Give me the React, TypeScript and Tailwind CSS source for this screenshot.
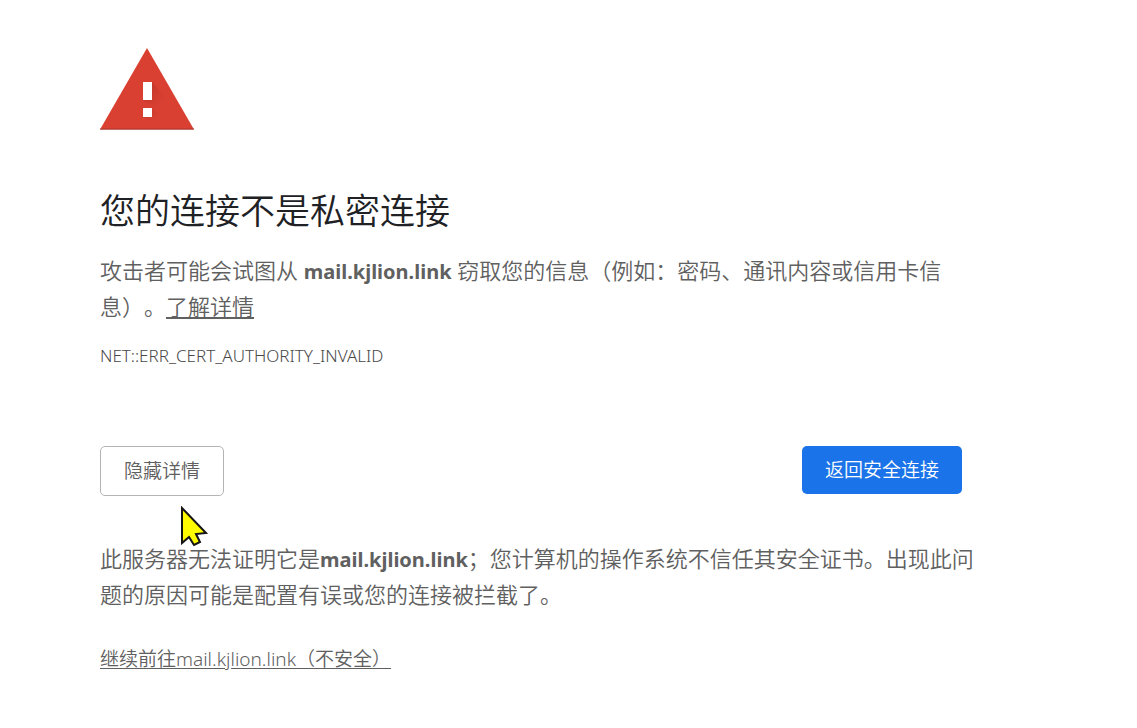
function WarningIcon() {
  return (
    <svg className="block h-[84px] w-24" viewBox="0 0 96 84" aria-hidden="true">
      <defs>
        <linearGradient id="shade" x1="0" y1="0" x2="1" y2="1">
          <stop offset="0" stopColor="#a82c22" stopOpacity="0.75" />
          <stop offset="1" stopColor="#db4437" stopOpacity="0" />
        </linearGradient>
      </defs>
      <path d="M47 1 94 82.500H0Z" fill="#da4032" />
      <path d="M52 35l14 16v16L43 53h9Z" fill="url(#shade)" />
      <path d="M52 61l9 10-9 4-9-5Z" fill="url(#shade)" />
      <path d="M0 82h94" stroke="#a8382e" />
      <path d="M43 35h9v18h-9ZM43 61h9v9h-9Z" fill="#fff" />
    </svg>
  );
}

function Pointer() {
  return (
    <svg
      className="pointer-events-none absolute left-20 top-[60px] h-[42px] w-8"
      viewBox="0 0 32 42"
      aria-hidden="true"
    >
      <path
        d="M2 2v35l7-6 5 8 6-3-4-8 10-1Z"
        fill="#fffb00"
        stroke="#151515"
        strokeWidth="2"
      />
    </svg>
  );
}

export default function App() {
  return (
    <main className="min-h-screen bg-white pb-12 pl-[100px] pr-6 pt-[47px] font-['Noto_Sans','Noto_Sans_CJK_SC',sans-serif] font-[350] text-[#606060] [text-spacing-trim:space-all]">
      <div className="max-w-[862px]">
        <WarningIcon />
        <h1 className="mt-[54px] font-['Noto_Sans_CJK_SC',sans-serif] text-[35px] font-[350] leading-[48px] text-[#202124]">
          您的连接不是私密连接
        </h1>
        <p className="mt-5 text-[22px] leading-[35px] md:whitespace-nowrap">
          攻击者可能会试图从 <strong className="text-[20px]">mail.kjlion.link</strong>{" "}
          窃取您的信息（例如：密码、通讯内容或信用卡信
          <br className="hidden md:inline" />
          息）。
          <a href="#details" className="underline underline-offset-2">
            了解详情
          </a>
        </p>
        <p className="mt-5 text-[17px] leading-6 text-[#484848]">
          NET::ERR_CERT_AUTHORITY_INVALID
        </p>
        <div className="relative mt-[78px] flex items-start justify-between">
          <button
            type="button"
            className="h-[50px] rounded-[5px] border border-[#b4b4b4] px-[23px] text-[19px] leading-6"
          >
            隐藏详情
          </button>
          <button
            type="button"
            className="h-12 rounded-[5px] bg-[#1a73e8] px-[23px] text-[19px] leading-6 text-white"
          >
            返回安全连接
          </button>
          <Pointer />
        </div>
        <p id="details" className="mt-[45px] text-[22px] leading-[35px] md:whitespace-nowrap">
          此服务器无法证明它是<strong className="text-[20px]">mail.kjlion.link</strong>
          ；您计算机的操作系统不信任其安全证书。出现此问
          <br className="hidden md:inline" />
          题的原因可能是配置有误或您的连接被拦截了。
        </p>
        <p className="mt-8 text-[19px] leading-[30px]">
          <a href="#proceed" className="underline underline-offset-2">
            继续前往mail.kjlion.link（不安全）
          </a>
        </p>
      </div>
    </main>
  );
}
